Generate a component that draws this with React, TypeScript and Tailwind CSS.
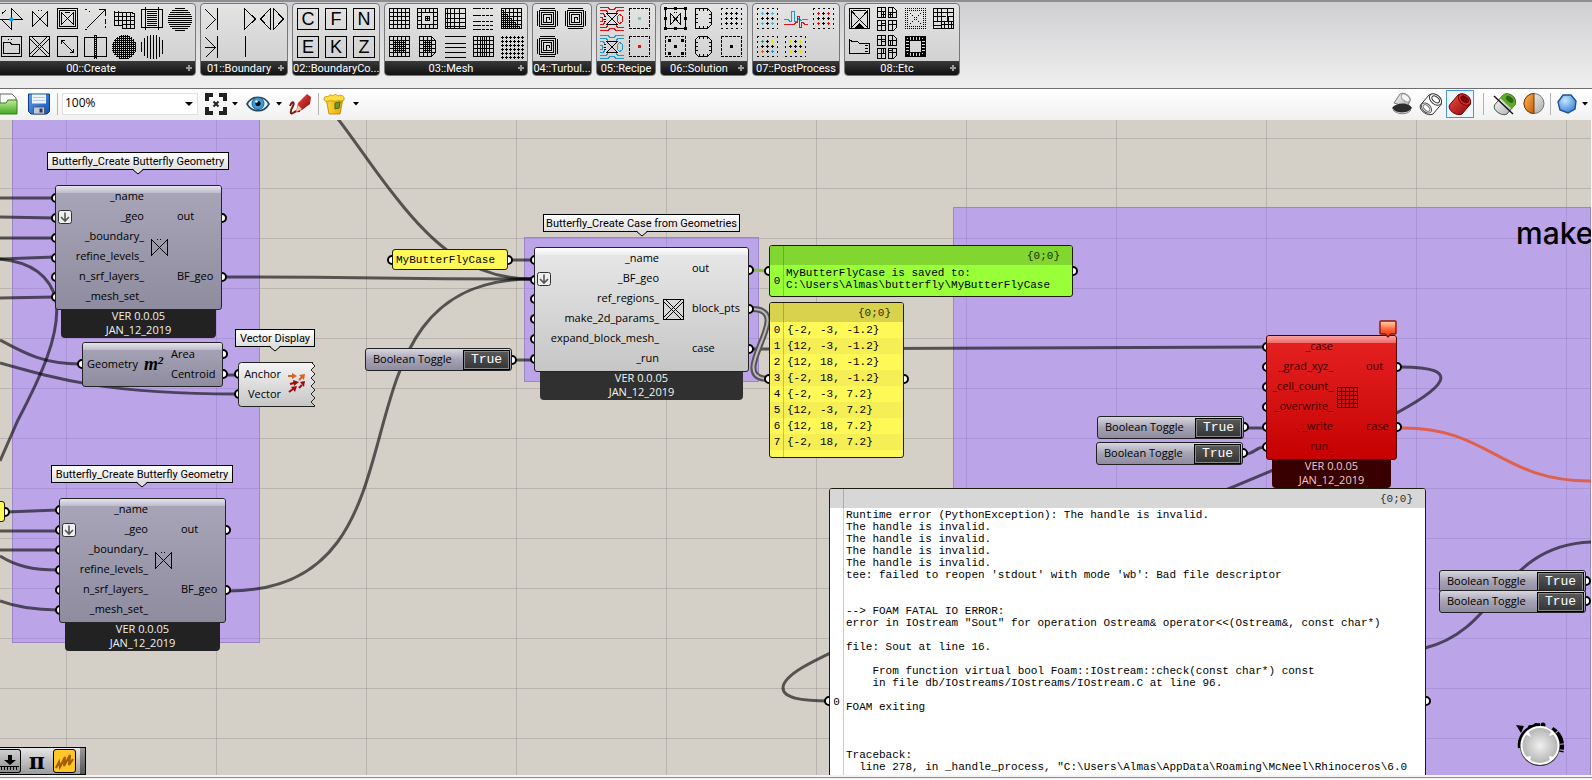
import React from "react";

/* ---------- path helpers for the component icons ---------- */

const range = (from: number, to: number, step: number) => {
  const out: number[] = [];
  for (let v = from; v <= to; v += step) out.push(v);
  return out;
};
const hLines = (ys: number[], x1 = 2, x2 = 22) => ys.map((y) => `M${x1} ${y}.5H${x2}`).join("");
const vLines = (xs: number[], y1 = 2, y2 = 22) => xs.map((x) => `M${x}.5 ${y1}V${y2}`).join("");
const chord = (v: number) => Math.round(Math.sqrt(Math.max(0, 150 - (v - 12) * (v - 12))));
const ballH = (step: number) => range(1, 23, step).map((y) => `M${Math.max(0, 12 - chord(y))} ${y}.5H${Math.min(24, 12 + chord(y))}`).join("");
const ballV = (step: number) => range(1, 23, step).map((x) => `M${x}.5 ${Math.max(0, 12 - chord(x))}V${Math.min(24, 12 + chord(x))}`).join("");
const BOX = "M1.5 1.5H21.5V21.5H1.5Z";
const GRID = hLines([1, 5, 9, 13, 17, 21], 1, 22) + vLines([1, 5, 9, 13, 17, 21], 1, 22);
const plus = (x: number, y: number) => `M${x - 1} ${y}.5H${x + 2}M${x}.5 ${y - 1}V${y + 2}`;

function Glyph({ children, d, className = "size-6" }: { children?: React.ReactNode; d?: string; className?: string }) {
  return (
    <svg viewBox="0 0 24 24" className={className} fill="none" stroke="#000" shapeRendering="crispEdges" aria-hidden="true">
      {d && <path d={d} />}
      {children}
    </svg>
  );
}

const Dashed = () => <path d="M1 1.5H22M1 21.5H22M1.5 1V22M21.5 1V22" strokeDasharray="3 1" />;

function Dot({ x = 10, y = 10, c = "#000", s = 3 }: { x?: number; y?: number; c?: string; s?: number }) {
  return <rect x={x} y={y} width={s} height={s} fill={c} stroke="none" />;
}

function PlusField({ marks = [] }: { marks?: string[] }) {
  const spots = [
    [6, 6],
    [16, 6],
    [6, 16],
    [16, 16],
  ];
  return (
    <Glyph>
      <path d="M1 1.5H22M1 21.5H22M1.5 1V22M21.5 1V22" strokeDasharray="2 3" />
      <path d={plus(11, 6) + plus(6, 11) + plus(11, 11) + plus(16, 11) + plus(11, 16)} />
      {spots.map(([x, y], i) => (
        <path key={i} d={plus(x, y)} stroke={marks[i] ?? "#000"} />
      ))}
    </Glyph>
  );
}

function Spiral() {
  return (
    <Glyph d="M4 1.5H19M1.5 4V19M21.5 4V19M4 21.5H19M3.5 3.5H19.5V19.5H3.5ZM5.5 5.5H17.5V17.5H5.5ZM7.5 7.5H15.5V15.5H7.5ZM10.5 15V10.5H13.5V13" />
  );
}

function Contour({ c }: { c: string }) {
  return (
    <Glyph>
      <path
        stroke={c}
        d="M0 .5H8L10 2.5H14L16 .5H24M0 3.5H6L8 5.5M24 3.5H18L16 5.5M0 6.5H3L5 8.5M0 23.5H8L10 21.5H14L16 23.5H24M0 20.5H6L8 18.5M24 20.5H18L16 18.5M0 17.5H3L5 15.5M0 10.5H2L3 12.5L2 14.5H0M17 9.5L20 7.5L22.5 9.5V14.5L20 16.5L17 14.5Z"
      />
      <path d="M6.5 6.5H17.5L6.5 17.5H17.5ZM4 9.5H6M4 12.5H6M4 14.5H6" />
    </Glyph>
  );
}

function Capsule({ left }: { left: boolean }) {
  return (
    <Glyph d={left ? "M3.5 4.5L6.5 1.5H15.5L19.5 5.5V17.5L15.5 21.5H6.5L3.5 18.5Z" : "M3.5 1.5H15.5L19.5 5.5V17.5L15.5 21.5H3.5Z"}>
      <path d="M7.5 2V4M11.5 2V4M15.5 2V4M7.5 19V21M11.5 19V21M15.5 19V21M4 7.5H6M4 11.5H6M4 15.5H6M17 7.5H19M17 11.5H19M17 15.5H19" />
    </Glyph>
  );
}

function Quads({ dense }: { dense: boolean }) {
  return (
    <Glyph>
      <path d="M1.5 .5H9.5V10.5H1.5ZM1.5 13.5H9.5V23.5H1.5ZM12.5 .5H17.5L20.5 3.5V10.5H12.5ZM12.5 13.5H20.5V20.5L17.5 23.5H12.5Z" />
      <path d="M1 4.5H9M5.5 1V10M1 18.5H9M5.5 14V23M12 5.5H20M16.5 1V10M12 17.5H20M16.5 14V23" />
      {dense ? <path d="M5 7.5H9M7.5 4V10M5 16.5H9M14.5 5V10M12 7.5H16" /> : <path d="M5 6.5H9M7.5 14V18M14.5 5V10M12 15.5H16" />}
    </Glyph>
  );
}

function Letter({ ch }: { ch: string }) {
  return (
    <span className="flex size-[22px] items-center justify-center border border-black font-['Liberation_Sans'] text-[18px] leading-none text-black">{ch}</span>
  );
}

const EMPTY = null;

const ribbon: { title: string; more: boolean; width: string; cols: string; rows: (React.ReactNode | null)[][] }[] = [
  {
    title: "00::Create",
    more: true,
    width: "w-[200px]",
    cols: "grid-cols-7",
    rows: [
      [
        <Glyph d="M0 12.5H22.5L11.5 1.5V22.5L1.5 12.5M2 6.5L6 3.5">
          <circle cx="11.5" cy="12.5" r="1.8" fill="#0aa0dc" stroke="#0aa0dc" shapeRendering="auto" />
        </Glyph>,
        <Glyph d="M4.5 4.5V19.5L19.5 4.5V19.5ZM10 3.5H11M13 3.5H14" />,
        <Glyph d={BOX + "M3.5 3.5H19.5V19.5H3.5ZM5.5 5.5V17.5L17.5 5.5V17.5ZM9 5.5H14"} />,
        <Glyph d="M2.5 21.5L21.5 2.5M15 2.5H21.5V9M1 2.5H3M5 4.5H6M1 22.5H3M21.5 12V17M21.5 19V21" />,
        <Glyph d="M2.5 3.5V18.5H10V21.5H22.5V6.5L18.5 5.5H2.5M2 9.5H22M2 13.5H22M10 17.5H22M6.5 4V18M10.5 5V21M14.5 6V21M18.5 6V21" />,
        <Glyph d={"M1.5 2.5H22.5V20.5H1.5ZM5.5 0V23M18.5 0V23" + hLines(range(4, 19, 2), 7, 17)} />,
        <Glyph d={ballH(2)} />,
      ],
      [
        <Glyph d={BOX + "M3.5 7.5V18.5H19.5V9.5H12L10 7.5ZM8 4.5H9M11 4.5H12"} />,
        <Glyph d={BOX + "M1 3L20 22M3 1L22 20M1 20L20 1M3 22L22 3"} />,
        <Glyph d={BOX + "M5.5 5.5L17.5 17.5M5 9V5.5H9M14 17.5H17.5V14"} />,
        <Glyph d="M.5 2.5H22.5V21.5H.5Z">
          <path d="M10.5 0V24M12.5 0V24" />
          <path d="M11.5 0V24" strokeDasharray="1 1" />
        </Glyph>,
        <Glyph d={ballH(2) + ballV(2)} />,
        <Glyph d={ballV(3)} />,
        EMPTY,
      ],
    ],
  },
  {
    title: "01::Boundary",
    more: true,
    width: "w-[88px]",
    cols: "grid-cols-3",
    rows: [
      [<Glyph d="M1.5 2.5L11.5 12.5L1.5 22.5M13.5 1V23" />, <Glyph d="M12.5 1.5V22.5L23.5 12Z" />, <Glyph d="M10.5 1.5V22.5L.5 12ZM13.5 1.5V22.5L23.5 12Z" />],
      [<Glyph d="M1.5 2.5L11.5 12.5L1.5 22.5M1 12.5H11M13.5 1V23" />, <Glyph d="M13.5 1V22" />, EMPTY],
    ],
  },
  {
    title: "02::BoundaryCo...",
    more: false,
    width: "w-[88px]",
    cols: "grid-cols-3",
    rows: [
      [<Letter ch="C" />, <Letter ch="F" />, <Letter ch="N" />],
      [<Letter ch="E" />, <Letter ch="K" />, <Letter ch="Z" />],
    ],
  },
  {
    title: "03::Mesh",
    more: true,
    width: "w-[144px]",
    cols: "grid-cols-5",
    rows: [
      [
        <Glyph d={GRID} />,
        <Glyph d={BOX + "M5.5 5.5H17.5V17.5H5.5ZM5.5 1V5M9.5 1V5M13.5 1V5M17.5 1V5M5.5 18V22M9.5 18V22M13.5 18V22M17.5 18V22M1 5.5H5M1 9.5H5M1 13.5H5M1 17.5H5M18 5.5H22M18 9.5H22M18 13.5H22M18 17.5H22M9.5 9.5H13.5V13.5H9.5ZM11.5 9V14M9 11.5H14"} />,
        <Glyph d={hLines([1, 6, 11, 15, 19, 21], 1, 22) + vLines([1, 3, 6, 10, 15, 21], 1, 22)} />,
        <Glyph>
          <path d="M1 1.5H9M1 8.5H9M1 14.5H9M1 18.5H9M1 22.5H9" />
          <path d="M10 1.5H22M10 8.5H22M10 14.5H22M10 18.5H22M10 22.5H22" strokeDasharray="3 1" />
        </Glyph>,
        <Glyph d={GRID + range(3, 19, 2).map((v) => `M1 ${v}.5H${v}M${22 - v}.5 ${22 - v}V22`).join("")} />,
      ],
      [
        <Glyph d={GRID + hLines(range(5, 17, 2), 6, 18) + vLines(range(5, 17, 2), 6, 18)} />,
        <Glyph d={"M3.5 1.5H15.5L19.5 5.5V17.5L15.5 21.5H3.5Z" + hLines([5, 9, 13, 17], 3, 19) + vLines([7, 11, 15], 2, 21) + hLines(range(7, 15, 2), 7, 16) + vLines(range(7, 15, 2), 6, 17)} />,
        <Glyph d={hLines([1, 8, 12, 17, 22], 1, 22)} />,
        <Glyph d={hLines([1, 5, 9, 13, 17, 21], 1, 22) + vLines([1, 5, 8, 10, 12, 14, 17, 21], 1, 22)} />,
        <Glyph>
          {range(2, 22, 4).map((y) => (
            <path key={y} d={range(2, 22, 4).map((x) => plus(x, y)).join("")} />
          ))}
        </Glyph>,
      ],
    ],
  },
  {
    title: "04::Turbul...",
    more: false,
    width: "w-[60px]",
    cols: "grid-cols-2",
    rows: [
      [<Spiral />, <Spiral />],
      [<Spiral />, EMPTY],
    ],
  },
  {
    title: "05::Recipe",
    more: false,
    width: "w-[60px]",
    cols: "grid-cols-2",
    rows: [
      [
        <Contour c="#e01010" />,
        <Glyph>
          <Dashed />
          <Dot c="#6cc8d0" />
        </Glyph>,
      ],
      [
        <Contour c="#1c9ad0" />,
        <Glyph>
          <Dashed />
          <Dot c="#e01010" />
        </Glyph>,
      ],
    ],
  },
  {
    title: "06::Solution",
    more: true,
    width: "w-[88px]",
    cols: "grid-cols-3",
    rows: [
      [
        <Glyph d={BOX + "M6.5 6.5V17.5L16.5 6.5V17.5ZM10 5.5H11M12 5.5H13"}>
          {[0, 10, 20].map((x) => [0, 10, 20].map((y) => (x === 10 && y === 10 ? null : <Dot key={`${x}-${y}`} x={x} y={y} />)))}
        </Glyph>,
        <Capsule left={false} />,
        <PlusField />,
      ],
      [
        <Glyph>
          <Dashed />
          <Dot />
          <Dot x={4} y={4} />
          <Dot x={17} y={4} />
          <Dot x={4} y={17} />
          <Dot x={17} y={17} />
        </Glyph>,
        <Capsule left />,
        <Glyph>
          <Dashed />
          <Dot />
        </Glyph>,
      ],
    ],
  },
  {
    title: "07::PostProcess",
    more: false,
    width: "w-[88px]",
    cols: "grid-cols-3",
    rows: [
      [
        <PlusField marks={["#48b8d0", "#48b8d0", "#48b8d0", "#48b8d0"]} />,
        <Glyph>
          <path d="M0 12.5H4L6 14.5H7V4.5H10V14.5H13L15 11.5L17 13.5L19 12.5H24" stroke="#1c9ad0" />
          <path d="M0 17.5H10L12 15.5H13V9.5H15V20.5H17V15.5H19L21 17.5H24" stroke="#d81818" />
        </Glyph>,
        <PlusField marks={["#e01010", "#e01010", "#e01010", "#e01010"]} />,
      ],
      [<PlusField marks={["#1a9a60", "#e8e010", "#e86020", "#1890e0"]} />, <PlusField marks={["#e0e010", "#e0e010", "#e0e010", "#e0e010"]} />, EMPTY],
    ],
  },
  {
    title: "08::Etc",
    more: true,
    width: "w-[116px]",
    cols: "grid-cols-4",
    rows: [
      [
        <Glyph d={BOX + "M3.5 3V20M19.5 3V20M3 3.5L11.5 12.5L20 3.5M3 21L11.5 12.5L20 21M5 3.5H18"}>
          <path d="M7 21L11.5 16.5L16 21Z" fill="#000" />
        </Glyph>,
        <Quads dense />,
        <Glyph>
          <path d="M1 1.5H22M1 3.5H22M1 19.5H22M1 21.5H22M1.5 1V22M3.5 1V22M19.5 1V22M21.5 1V22" strokeDasharray="1 1" />
          {range(6, 16, 2).map((v) => (
            <path key={v} d={`M${v} ${v}.5H${v + 1}M${22 - v} ${v}.5H${23 - v}`} />
          ))}
        </Glyph>,
        <Glyph d={BOX + "M5.5 1V14M9.5 1V22M1 9.5H14M1 5.5H22M1 14.5H22M15.5 1V14M15 9.5H22M10 17.5H22M12.5 15V22M16.5 9V22M19.5 14V22M1 18.5H9"} />,
      ],
      [
        <Glyph d="M1.5 4.5V18.5H21.5V8.5H12L9 6.5H4L1.5 4.5ZM17 10.5H20M17 13.5H20M17 16.5H20" />,
        <Quads dense={false} />,
        <Glyph d={BOX + "M5.5 5.5H17.5V17.5H5.5Z"}>
          <path d="M1 3.5H22M1 19.5H22M3.5 1V22M19.5 1V22" strokeWidth="3" strokeDasharray="2 1" />
        </Glyph>,
        EMPTY,
      ],
    ],
  },
];

function Ribbon() {
  return (
    <div className="flex h-[88px] shrink-0 items-start gap-1 overflow-hidden border-t-2 border-[#8e8e92] bg-linear-to-b from-[#cfcfd1] to-[#f0eff0] pt-px">
      {ribbon.map((tab, t) => (
        <section key={tab.title} className={`${tab.width} ${t === 0 ? "-ml-1" : ""} flex h-[73px] shrink-0 flex-col overflow-hidden rounded-[4px] border border-[#77777a] bg-linear-to-b from-[#e4e4e4] to-[#cdcdcd]`}>
          <div className={`grid ${tab.cols} flex-1 px-px pt-px`}>
            {tab.rows.flat().map((icon, i) =>
              icon ? (
                <button key={i} type="button" aria-label={`${tab.title} ${i + 1}`} className="flex size-7 items-center justify-center">
                  {icon}
                </button>
              ) : (
                <span key={i} />
              ),
            )}
          </div>
          <div className="flex h-[14px] items-center bg-linear-to-b from-[#3a3a3a] to-[#111] font-['Roboto'] text-[11px] leading-none text-white">
            <span className="flex-1 text-center whitespace-nowrap">{tab.title}</span>
            {tab.more && (
              <svg viewBox="0 0 8 8" className="mr-0.5 size-2" stroke="#9a9a9a" strokeWidth="2" aria-hidden="true">
                <path d="M4 1V7M1 4H7" />
              </svg>
            )}
          </div>
        </section>
      ))}
    </div>
  );
}

/* ---------- canvas toolbar ---------- */

function Caret() {
  return (
    <svg viewBox="0 0 6 4" className="h-1 w-1.5 shrink-0" aria-hidden="true">
      <path d="M0 0H6L3 3.5Z" />
    </svg>
  );
}

const Separator = () => <span className="h-[22px] w-px bg-[#b4b4b4]" />;

function Tool({ label, children, className = "w-6" }: { label: string; children: React.ReactNode; className?: string }) {
  return (
    <button type="button" aria-label={label} className={`flex h-7 shrink-0 items-center justify-center ${className}`}>
      {children}
    </button>
  );
}

function Cylinder({ body, top, hole, edge }: { body: string; top: string; hole: string; edge: string }) {
  return (
    <g stroke={edge} strokeLinejoin="round">
      <path d="M1.5 13L10 3C14 0 23 7 22.5 12L14 22C9 25 -1 18 1.5 13Z" fill={body} />
      <ellipse cx="16.5" cy="7.5" rx="7" ry="4.6" transform="rotate(40 16.5 7.5)" fill={top} />
      <ellipse cx="16.7" cy="7.3" rx="4.4" ry="2.6" transform="rotate(40 16.7 7.3)" fill={hole} />
    </g>
  );
}

function Toolbar() {
  return (
    <div className="flex h-8 shrink-0 items-center border-t border-[#6f6f72] bg-linear-to-b from-white to-[#f1f1f1] pr-1 pb-0.5">
      <svg width="0" height="0" className="absolute" aria-hidden="true">
        <defs>
          <linearGradient id="grn" x1="0" y1="0" x2="0" y2="1"><stop offset="0" stopColor="#c4ec9c" /><stop offset="1" stopColor="#3fa81f" /></linearGradient>
          <linearGradient id="blu" x1="0" y1="0" x2="1" y2="1"><stop offset="0" stopColor="#5aa2f0" /><stop offset="1" stopColor="#124fb4" /></linearGradient>
          <linearGradient id="red" x1="0" y1="0" x2="1" y2="1"><stop offset="0" stopColor="#f05048" /><stop offset="1" stopColor="#8c0404" /></linearGradient>
          <linearGradient id="gry" x1="0" y1="0" x2="1" y2="1"><stop offset="0" stopColor="#fff" /><stop offset="1" stopColor="#a8a8a8" /></linearGradient>
          <linearGradient id="org" x1="0" y1="0" x2="1" y2="1"><stop offset="0" stopColor="#ffb860" /><stop offset="1" stopColor="#c85c00" /></linearGradient>
          <linearGradient id="yel" x1="0" y1="0" x2="1" y2="0"><stop offset="0" stopColor="#ffd83c" /><stop offset="1" stopColor="#e8a400" /></linearGradient>
          <radialGradient id="sky" cx=".4" cy=".3" r=".7"><stop offset="0" stopColor="#c8e6ff" /><stop offset="1" stopColor="#3c84d8" /></radialGradient>
        </defs>
      </svg>
      <Tool label="Open" className="-ml-1 w-6">
        <svg viewBox="0 0 24 24" className="size-6" aria-hidden="true">
          <path d="M4 2H16L20 6V14H4Z" fill="#fafafa" stroke="#666" />
          <path d="M0 11H10L12 8H21V22H0Z" fill="url(#grn)" stroke="#3a7a1c" />
        </svg>
      </Tool>
      <Tool label="Save" className="ml-[7px] w-6">
        <svg viewBox="0 0 24 24" className="size-6" aria-hidden="true">
          <path d="M1.5 2H22.5V19.5L20 22H4L1.5 19.5Z" fill="url(#blu)" stroke="#0e3c8c" />
          <path d="M5 2.5H19V11.5H5Z" fill="#eef4fc" />
          <path d="M6 5.5H18M6 8.5H18" stroke="#b8c8dc" />
          <path d="M6.5 15H17.5V22H6.5Z" fill="#c4c8d0" stroke="#445" strokeWidth=".7" />
          <path d="M12.5 16.5H15.5V20.5H12.5Z" fill="#1c3a78" />
        </svg>
      </Tool>
      <span className="ml-1.5 flex items-center gap-1">
        <Separator />
        <span className="relative flex h-[22px] w-[136px] items-center border border-[#e0e0e0] bg-white">
          <select aria-label="Zoom" defaultValue="100%" className="h-full w-full appearance-none bg-transparent pb-0.5 pl-0.5 text-[12px] leading-none outline-none">
            <option>100%</option>
            <option>200%</option>
          </select>
          <svg viewBox="0 0 8 4" className="pointer-events-none absolute right-1 h-1 w-2" aria-hidden="true"><path d="M0 0H8L4 4Z" /></svg>
        </span>
      </span>
      <Tool label="Zoom extents" className="ml-1.5 w-6">
        <svg viewBox="0 0 24 24" className="size-6" fill="none" stroke="#222" strokeWidth="4" aria-hidden="true">
          <path d="M3 9V3H9M15 3H21V9M21 15V21H15M9 21H3V15" />
          <path d="M9.5 9.5L14.5 14.5M14.5 9.5L9.5 14.5" strokeWidth="2" />
        </svg>
      </Tool>
      <span className="mr-2 ml-1 flex"><Caret /></span>
      <Tool label="Named views">
        <svg viewBox="0 0 24 24" className="size-6" aria-hidden="true">
          <path d="M1 12C6 3 18 3 23 12C18 21 6 21 1 12Z" fill="#e4f2fa" stroke="#26485e" strokeWidth="1.6" />
          <circle cx="12" cy="11.5" r="6" fill="#3d9bd6" stroke="#1a5c8c" />
          <circle cx="12" cy="11.5" r="2.6" fill="#081018" />
          <circle cx="10.5" cy="9.5" r="1.3" fill="#fff" />
        </svg>
      </Tool>
      <span className="mr-1.5 ml-1.5 flex"><Caret /></span>
      <Tool label="Sketch">
        <svg viewBox="0 0 24 24" className="size-6" aria-hidden="true">
          <path d="M2 14C4 9 7 9 5 14C2 19 2 23 5 21C8 19 8 19 12 19" fill="none" stroke="#7c1c14" strokeWidth="2" />
          <path d="M8 20L10 11L19 2L23 5L22 12L14 18Z" fill="url(#red)" />
          <path d="M8 20L10 13L14 17Z" fill="#f0c8a0" />
        </svg>
      </Tool>
      <span className="mr-[3px] ml-1.5 flex"><Separator /></span>
      <Tool label="Preview settings">
        <svg viewBox="0 0 24 24" className="size-6" aria-hidden="true">
          <path d="M4 6H21L18 22H7Z" fill="url(#yel)" stroke="#b87c00" strokeWidth=".8" />
          <path d="M2 7C2 4 5 4 6 5C7 2 10 3 11 4C13 1 15 3 16 4C19 2 23 4 22 8C20 10 17 8 15 9C12 10 9 8 7 9C5 10 2 9 2 7Z" fill="#ffdc40" stroke="#c08800" strokeWidth=".8" />
          <path d="M13 11L18 10L17 16L13 17Z" fill="#6a9a28" stroke="#476a10" />
        </svg>
      </Tool>
      <span className="ml-[7px] flex"><Caret /></span>

      <div className="ml-auto flex items-center gap-[5px]">
        <Tool label="No preview">
          <svg viewBox="0 0 24 24" className="size-6" aria-hidden="true">
            <path d="M4 11L10 2C14 -1 22 5 20 9L17 15Z" fill="url(#gry)" stroke="#777" />
            <ellipse cx="15.5" cy="6" rx="5" ry="3" transform="rotate(40 15.5 6)" fill="#f4f4f4" stroke="#999" />
            <path d="M2 16C6 10 19 10 22 16C18 22 6 22 2 16Z" fill="#2c2c2c" />
            <path d="M3 18C8 23 17 23 21 18" fill="none" stroke="#777" />
          </svg>
        </Tool>
        <Tool label="Wireframe preview">
          <svg viewBox="0 0 24 24" className="size-6" aria-hidden="true">
            <Cylinder body="#fff" top="#fff" hole="#fff" edge="#333" />
            <ellipse cx="7.5" cy="16" rx="6" ry="4" transform="rotate(45 7.5 16)" fill="none" stroke="#555" />
            <ellipse cx="7.5" cy="16" rx="4" ry="2.3" transform="rotate(45 7.5 16)" fill="none" stroke="#777" />
          </svg>
        </Tool>
        <Tool label="Shaded preview" className="-ml-0.5 w-7 border border-[#4a94d8] bg-[#eef6fd]">
          <svg viewBox="0 0 24 24" className="size-6" aria-hidden="true">
            <Cylinder body="url(#red)" top="#d83830" hole="#7c0808" edge="#700" />
          </svg>
        </Tool>
        <span className="mx-1 flex"><Separator /></span>
        <Tool label="Preview selected only">
          <svg viewBox="0 0 24 24" className="size-6" aria-hidden="true">
            <Cylinder body="url(#gry)" top="#8ed050" hole="#3c7c10" edge="#4a5a40" />
            <path d="M7 6L11 2C15 0 23 7 22.5 12L19 17Z" fill="#5aac20" />
            <ellipse cx="16.7" cy="7.3" rx="4.4" ry="2.6" transform="rotate(40 16.7 7.3)" fill="#2e6a0c" />
            <path d="M1 4L20 22" stroke="#111" strokeWidth="1.4" />
          </svg>
        </Tool>
        <Tool label="Material settings">
          <svg viewBox="0 0 24 24" className="size-6" aria-hidden="true">
            <circle cx="12" cy="11.5" r="10" fill="url(#gry)" stroke="#777" />
            <path d="M12 1.5A10 10 0 0 0 12 21.5Z" fill="url(#org)" stroke="#7c3800" />
          </svg>
        </Tool>
        <span className="-mx-px flex"><Separator /></span>
        <Tool label="Mesh quality">
          <svg viewBox="0 0 24 24" className="size-6" aria-hidden="true">
            <path d="M8 3L16 3L21 9L20 17L13 21L5 18L3 10Z" fill="url(#sky)" stroke="#244f94" strokeWidth="1.4" />
          </svg>
        </Tool>
        <span className="-ml-0.5 flex"><Caret /></span>
      </div>
    </div>
  );
}

/* ---------- canvas objects ---------- */

const cubic = (x1: number, y1: number, x2: number, y2: number, d: number) => `M${x1} ${y1}C${x1 + d} ${y1} ${x2 - d} ${y2} ${x2} ${y2}`;

const wires = [
  "M0 198H55",
  "M0 217L55 218",
  "M0 238H55",
  "M0 259L55 257",
  "M0 298L55 297",
  "M0 259C30 262 50 275 56 300C61 334 40 378 18 420L0 461",
  "M0 340C26 354 44 364 80 364",
  "M0 363C60 380 110 394 236 394",
  "M226 375H237",
  cubic(224, 277, 532, 279, 150),
  cubic(228, 591, 532, 279, 220),
  "M338 119C356 142 375 172 398 200C432 243 470 279 532 279",
  "M510 260H533",
  "M516 360H533",
  cubic(753, 349, 1265, 347, 250),
  "M1401 367C1530 367 1322 451 1118 534",
  "M900 620C840 650 783 670 783 688C783 699 806 701 829 701",
  "M1245 428H1265",
  cubic(1245, 454, 1265, 447, 10),
  "M1425 648C1500 630 1500 545 1592 542",
  "M6 512L58 510",
  "M0 531H58",
  "M0 550H58",
  "M0 556C16 566 32 570 58 570",
  "M0 601C16 607 32 610 58 610",
];

const grips: [number, number][] = [
  ...[198, 218, 238, 258, 277, 297].map((y) => [56, y] as [number, number]),
  [222, 218],
  [222, 277],
  [82, 364],
  [223, 354],
  [223, 374],
  [239, 374],
  [239, 394],
  ...[510, 530, 550, 570, 590, 610].map((y) => [60, y] as [number, number]),
  [226, 530],
  [226, 590],
  [5, 512],
  [392, 260],
  [508, 260],
  [512, 360],
  ...[260, 280, 299, 319, 339, 359].map((y) => [535, y] as [number, number]),
  [749, 270],
  [749, 309],
  [749, 349],
  [769, 271],
  [1073, 271],
  [769, 379],
  [904, 379],
  [829, 701],
  [1426, 701],
  ...[347, 367, 387, 407, 427, 447].map((y) => [1267, y] as [number, number]),
  [1397, 367],
  [1397, 427],
  [1244, 427],
  [1243, 453],
  [1586, 581],
  [1586, 601],
];

function Wires() {
  return (
    <svg className="absolute inset-0 size-full" fill="none" aria-hidden="true">
      <g transform="translate(0 -120)">
        <g stroke="#000" strokeOpacity=".6" strokeWidth="3">
          {wires.map((d) => (
            <path key={d} d={d} />
          ))}
        </g>
        <path d={cubic(753, 270, 769, 271, 6)} stroke="#86b84a" strokeWidth="3" />
        <path d={cubic(752, 309, 769, 379, 46)} stroke="#57545a" strokeWidth="6" />
        <path d={cubic(752, 309, 769, 379, 46)} stroke="#bcb8b8" strokeWidth="2" />
        <path d="M1401 428C1490 427 1500 482 1592 481" stroke="#e0604e" strokeWidth="3" />
        {grips.map(([x, y]) => (
          <circle key={`${x}-${y}`} cx={x} cy={y} r="4" fill="#fff" stroke="#000" strokeWidth="2" />
        ))}
      </g>
    </svg>
  );
}

function Caption({ place, text }: { place: string; text: string }) {
  return (
    <div className={`absolute ${place} flex h-[18px] items-center justify-center border border-black bg-linear-to-b from-white to-[#dedede] font-['Roboto'] text-[11px] leading-none whitespace-nowrap text-black`}>
      {text}
      <svg viewBox="0 0 12 7" className="absolute top-[15px] h-[7px] w-3" aria-hidden="true">
        <path d="M0 0H12L6 6Z" fill="#dedede" />
        <path d="M0 1L6 6L12 1" fill="none" stroke="#000" />
      </svg>
    </div>
  );
}

function Flatten() {
  return (
    <svg viewBox="0 0 14 14" className="absolute top-6 left-0.5 size-3.5" aria-hidden="true">
      <rect x=".5" y=".5" width="13" height="13" rx="2" fill="#eee" stroke="#333" />
      <path d="M7 2.5V11M3 7L7 11L11 7" fill="none" stroke="#555" strokeWidth="1.6" />
    </svg>
  );
}

const skins = {
  hidden: {
    body: "border-[#232326] bg-linear-to-b from-[#a8a6b8] to-[#8e8c9e] text-black",
    shine: "from-[#e6e5ec] to-[#bdbbca]",
    foot: "bg-[#222] text-[#f0f0f0]",
  },
  normal: {
    body: "border-[#232323] bg-linear-to-b from-[#e8e8e8] to-[#c6c6c6] text-black",
    shine: "from-white to-[#ececec]",
    foot: "bg-[#303030] text-[#f4f4f4]",
  },
  error: {
    body: "border-[#4a0000] bg-linear-to-b from-[#e62020] to-[#c60000] text-[#3c0000]",
    shine: "from-[#f8a4a4] to-[#ee6a6a]",
    foot: "bg-[#380000] text-[#f4c8c8]",
  },
};

function Component(props: { place: string; skin: keyof typeof skins; inputs: string[]; outputs: string[]; inWidth: string; outWidth: string; icon: React.ReactNode; flatten?: boolean }) {
  const skin = skins[props.skin];
  return (
    <article className={`absolute ${props.place} text-[11px] leading-none`}>
      <div className={`relative flex h-[125px] overflow-hidden rounded-[3px] border ${skin.body}`}>
        <span className={`absolute inset-x-0 top-0 h-[7px] bg-linear-to-b ${skin.shine}`} />
        {props.flatten && <Flatten />}
        <ul className={`relative flex flex-col text-right ${props.inWidth}`}>
          {props.inputs.map((name) => (
            <li key={name} className="h-5 pt-1 whitespace-nowrap">{name}</li>
          ))}
        </ul>
        <div className="flex w-[30px] items-center justify-center">{props.icon}</div>
        <ul className={`relative flex flex-col pb-1 pl-[3px] ${props.outWidth}`}>
          {props.outputs.map((name) => (
            <li key={name} className="flex flex-1 items-center whitespace-nowrap">{name}</li>
          ))}
        </ul>
      </div>
      <div className={`mx-1.5 -mt-px h-[29px] rounded-b-[4px] text-center leading-[14px] ${skin.foot}`}>
        VER 0.0.05
        <br />
        JAN_12_2019
      </div>
    </article>
  );
}

function Toggle({ place }: { place: string }) {
  return (
    <div className={`absolute ${place} flex h-[23px] w-[147px] items-center justify-between rounded-[3px] border border-[#222226] bg-linear-to-b from-[#d8d7de] via-[#a5a3b3] to-[#8e8c9e] pr-px pl-[7px]`}>
      <span className="pb-0.5 text-[11px] leading-none whitespace-nowrap">Boolean Toggle</span>
      <button type="button" aria-label="Boolean Toggle" className="flex h-5 w-[47px] items-center justify-center border border-black bg-linear-to-b from-[#5a5a5a] to-[#343434] font-['Liberation_Mono'] text-[13px] leading-none text-white outline-1 -outline-offset-2 outline-[#888]">
        True
      </button>
    </div>
  );
}

const panelBase = "absolute overflow-hidden rounded-[3px] border border-[#1c1c10] font-['Liberation_Mono'] text-[11px] leading-3 text-black";

function PanelHead({ tone }: { tone: string }) {
  return (
    <thead>
      <tr className={`h-[19px] ${tone}`}>
        <td className="w-[14px] border-r border-black/20" />
        <th scope="col" className="pr-3 text-right font-normal opacity-80">{"{0;0}"}</th>
      </tr>
    </thead>
  );
}

const points = ["{-2, -3, -1.2}", "{12, -3, -1.2}", "{12, 18, -1.2}", "{-2, 18, -1.2}", "{-2, -3, 7.2}", "{12, -3, 7.2}", "{12, 18, 7.2}", "{-2, 18, 7.2}"];

const log = `Runtime error (PythonException): The handle is invalid.
The handle is invalid.
The handle is invalid.
The handle is invalid.
The handle is invalid.
tee: failed to reopen 'stdout' with mode 'wb': Bad file descriptor


--> FOAM FATAL IO ERROR:
error in IOstream "Sout" for operation Ostream& operator<<(Ostream&, const char*)

file: Sout at line 16.

    From function virtual bool Foam::IOstream::check(const char*) const
    in file db/IOstreams/IOstreams/IOstream.C at line 96.

FOAM exiting



Traceback:
  line 278, in _handle_process, "C:\\Users\\Almas\\AppData\\Roaming\\McNeel\\Rhinoceros\\6.0`;

function Panels() {
  return (
    <>
      <div className={`${panelBase} top-[129px] left-[392px] flex h-[21px] w-[116px] items-center bg-[#fff958] pl-[3px]`}>MyButterFlyCase</div>
      <div className={`${panelBase} top-[381px] -left-5 h-[21px] w-[25px] bg-[#fff958]`} />

      <table className={`${panelBase} top-[125px] left-[769px] h-[52px] w-[304px] border-separate border-spacing-0 bg-[#98ff38]`}>
        <PanelHead tone="bg-[#82d630]" />
        <tbody>
          <tr>
            <td className="w-[14px] border-r border-black/20 pl-px text-center">0</td>
            <td className="pb-1 pl-[2px] whitespace-pre">{"MyButterFlyCase is saved to:\nC:\\Users\\Almas\\butterfly\\MyButterFlyCase"}</td>
          </tr>
        </tbody>
      </table>

      <table className={`${panelBase} top-[182px] left-[769px] h-[156px] w-[135px] border-separate border-spacing-0 bg-[#fff958]`}>
        <PanelHead tone="bg-[#d8d24c]" />
        <tbody>
          {points.map((p, i) => (
            <tr key={i} className={`h-4 ${i % 2 ? "bg-[#f5ee54]" : ""}`}>
              <td className="w-[14px] border-r border-black/20 pl-px text-center">{i}</td>
              <td className="pl-[3px] whitespace-pre">{p}</td>
            </tr>
          ))}
          <tr>
            <td className="border-r border-black/20" />
            <td />
          </tr>
        </tbody>
      </table>

      <table className={`${panelBase} top-[368px] left-[829px] h-[408px] w-[597px] border-separate border-spacing-0 bg-white`}>
        <PanelHead tone="bg-[#d7d7d7]" />
        <tbody>
          <tr>
            <td className="w-[14px] border-r border-black/20 text-center">0</td>
            <td className="pt-px pl-[2px] align-top whitespace-pre">{log}</td>
          </tr>
        </tbody>
      </table>
    </>
  );
}

const bowtieIcon = <Glyph d="M4.5 3.5V19.5L20.5 3.5V19.5ZM10 3.5H11M13 3.5H14" />;

function AreaNode() {
  return (
    <div className="absolute top-[222px] left-[82px] flex h-[45px] w-[141px] items-center overflow-hidden rounded-[3px] border border-[#232326] bg-linear-to-b from-[#a8a6b8] to-[#8e8c9e] pb-0.5 pl-1 text-[11px] leading-none">
      <span className="absolute inset-x-0 top-0 h-[7px] bg-linear-to-b from-[#e6e5ec] to-[#bdbbca]" />
      <span className="w-[57px]">Geometry</span>
      <span className="w-[27px] font-['Liberation_Serif'] text-[18px] font-bold italic">
        m<sup className="text-[11px]">2</sup>
      </span>
      <ul className="relative">
        <li className="flex h-5 items-center">Area</li>
        <li className="flex h-5 items-center">Centroid</li>
      </ul>
    </div>
  );
}

function VectorNode() {
  return (
    <div className="absolute top-[242px] left-[238px] flex h-[45px] w-[78px] items-center pb-[3px] pl-[5px] text-[11px] leading-none">
      <svg viewBox="0 0 78 45" className="absolute inset-0 size-full" aria-hidden="true">
        <defs>
          <linearGradient id="vec" x1="0" y1="0" x2="0" y2="1"><stop offset="0" stopColor="#f4f4f4" /><stop offset="1" stopColor="#c6c6c6" /></linearGradient>
        </defs>
        <path d="M77 .5H3.5Q.5 .5 .5 3.5V41.5Q.5 44.5 3.5 44.5H77L73 40L77 36L73 32L77 28L73 24L77 20L73 16L77 12L73 8L77 4L74 .5" fill="url(#vec)" />
        <path d="M75 .5H3.5Q.5 .5 .5 3.5V41.5Q.5 44.5 3.5 44.5H77" fill="none" stroke="#222" />
        <path d="M77 44L73 40L77 36L73 32L77 28L73 24L77 20L73 16L77 12L73 8L77 4L74 1" fill="none" stroke="#222" />
      </svg>
      <ul className="relative w-[38px]">
        <li className="flex h-5 items-center justify-end">Anchor</li>
        <li className="flex h-5 items-center justify-end">Vector</li>
      </ul>
      <svg viewBox="0 0 20 22" className="relative ml-1.5 h-[22px] w-5" aria-hidden="true">
        <g stroke="#e0601c" fill="#e0601c" strokeWidth="2">
          <path d="M1 4H5M12 8L15 5" />
          <path d="M5 1L10 4L5 7ZM12 3L18 2L17 8Z" stroke="none" />
        </g>
        <g stroke="#a00c0c" fill="#a00c0c" strokeWidth="2">
          <path d="M3 12L7 11M12 16L15 13M2 20L6 17" />
          <path d="M6 8L12 10L7 14ZM13 10L18 9L17 15ZM4 15L10 14L8 20Z" stroke="none" />
        </g>
      </svg>
    </div>
  );
}

function MarkovDial() {
  return (
    <svg viewBox="0 0 60 48" className="absolute top-[600px] left-[1510px] h-12 w-[60px]" aria-hidden="true">
      <defs>
        <radialGradient id="dial"><stop offset="0" stopColor="#f0f0f0" /><stop offset="1" stopColor="#b2b2b2" /></radialGradient>
      </defs>
      <path d="M10 28C8 16 18 6 30 5" fill="none" stroke="#000" strokeWidth="4" />
      <path d="M42 9C50 14 53 22 51 32" fill="none" stroke="#000" strokeWidth="5" strokeDasharray="5 1 12 1" />
      <path d="M6 5L14 6L11 13Z" fill="#000" />
      <circle cx="26" cy="5.500" r="2.500" />
      <circle cx="33" cy="5" r="2.500" />
      <circle cx="20" cy="7" r="2" />
      <circle cx="30" cy="26" r="20" fill="#333" />
      <circle cx="30" cy="25.500" r="18.500" fill="url(#dial)" stroke="#fff" strokeWidth="2" />
      <path d="M15 14L21 17L18 10ZM45 14L39 16L42 10ZM15 37L21 36L20 42ZM45 37L39 36L40 42Z" fill="#fff" />
    </svg>
  );
}

function CanvasTray() {
  return (
    <div className="absolute bottom-0 left-0 flex h-7 w-[86px] items-center gap-1 border border-l-0 border-black bg-linear-to-b from-[#e6e6e6] to-[#9c9c9c]">
      <button type="button" aria-label="Import" className="flex h-6 w-[21px] items-center justify-center rounded-r-[3px] border border-l-0 border-black bg-linear-to-b from-[#cfcfcf] to-[#909090]">
        <svg viewBox="0 0 20 20" className="size-5" aria-hidden="true">
          <path d="M8 4H12V9H16L10 14L4 9H8Z" />
          <path d="M0 15.5H19M1.5 16V19M4.5 16V19M7.5 16V19M10.5 16V19M13.5 16V19M16.5 16V19" stroke="#000" />
        </svg>
      </button>
      <button type="button" aria-label="Pi" className="flex size-6 items-center justify-center font-['DejaVu_Serif'] text-[22px] leading-none font-bold">
        π
      </button>
      <button type="button" aria-label="Scribble" className="flex size-6 items-center justify-center rounded-[3px] border border-black bg-[#ffc628]">
        <svg viewBox="0 0 20 20" className="size-5" fill="none" stroke="#a85c00" strokeWidth="2.200" aria-hidden="true">
          <path d="M2 17L5 11L6 16L11 6L10 15L16 4L15 14L19 8" />
        </svg>
      </button>
      <span className="ml-auto h-full w-[5px] bg-linear-to-b from-[#999] to-[#555]" />
    </div>
  );
}

const group = "absolute border border-[#9c86c4] bg-[#bba5e8]";
const gridFill =
  "bg-[linear-gradient(to_right,rgba(0,0,0,0.13)_1px,transparent_1px),linear-gradient(to_bottom,rgba(0,0,0,0.13)_1px,transparent_1px)] bg-[size:150px_50px] bg-[position:66px_18px]";
const gridSoft =
  "bg-[linear-gradient(to_right,rgba(60,30,110,0.13)_1px,transparent_1px),linear-gradient(to_bottom,rgba(60,30,110,0.13)_1px,transparent_1px)] bg-[size:150px_50px]";

function Canvas() {
  return (
    <main className={`relative mr-px flex-1 overflow-hidden bg-[#d4d0c8] ${gridFill}`}>
      <div className={`${group} ${gridSoft} -top-px left-3 h-[524px] w-[248px] bg-[position:53px_18px]`} />
      <div className={`${group} ${gridSoft} top-[117px] left-[524px] h-[145px] w-[235px] bg-[position:141px_0px]`} />
      <div className={`${group} ${gridSoft} top-[87px] right-0 -bottom-px left-[953px] bg-[position:12px_30px]`} />
      <h2 className="absolute top-[95px] left-[1516px] font-['Inter'] text-[30px] leading-9 font-medium whitespace-nowrap text-black">make</h2>
      <Wires />

      <Caption place="left-[47px] top-[32px] w-[182px]" text="Butterfly_Create Butterfly Geometry" />
      <Component place="left-[55px] top-[65px] w-[167px]" skin="hidden" flatten inWidth="w-[88px]" outWidth="w-[44px]" icon={bowtieIcon} inputs={["_name", "_geo", "_boundary_", "refine_levels_", "n_srf_layers_", "_mesh_set_"]} outputs={["out", "BF_geo"]} />
      <AreaNode />
      <Caption place="left-[235px] top-[209px] w-[80px]" text="Vector Display" />
      <VectorNode />

      <Caption place="left-[51px] top-[345px] w-[182px]" text="Butterfly_Create Butterfly Geometry" />
      <Component place="left-[59px] top-[378px] w-[167px]" skin="hidden" flatten inWidth="w-[88px]" outWidth="w-[44px]" icon={bowtieIcon} inputs={["_name", "_geo", "_boundary_", "refine_levels_", "n_srf_layers_", "_mesh_set_"]} outputs={["out", "BF_geo"]} />

      <Caption place="left-[543px] top-[94px] w-[197px]" text="Butterfly_Create Case from Geometries" />
      <Component
        place="left-[534px] top-[127px] w-[215px]"
        skin="normal"
        flatten
        inWidth="w-[124px]"
        outWidth="w-[54px]"
        icon={<Glyph d={BOX + "M1 3L20 22M3 1L22 20M1 20L20 1M3 22L22 3"} />}
        inputs={["_name", "_BF_geo", "ref_regions_", "make_2d_params_", "expand_block_mesh_", "_run"]}
        outputs={["out", "block_pts", "case"]}
      />
      <Toggle place="left-[365px] top-[228px]" />
      <Panels />

      <Component place="left-[1266px] top-[215px] w-[131px]" skin="error" inWidth="w-[66px]" outWidth="w-[28px]" icon={<Glyph d={GRID} />} inputs={["_case", "_grad_xyz_", "_cell_count_", "_overwrite_", "_write", "run_"]} outputs={["out", "case"]} />
      <svg viewBox="0 0 18 18" className="absolute top-[200px] left-[1379px] size-[18px]" aria-hidden="true">
        <defs>
          <linearGradient id="err" x1="0" y1="0" x2="0" y2="1"><stop offset="0" stopColor="#ffd8b8" /><stop offset=".5" stopColor="#ff6a3c" /><stop offset="1" stopColor="#f02800" /></linearGradient>
        </defs>
        <path d="M2 1H16Q17 1 17 2V13Q17 14 16 14H12L9 17L6 14H2Q1 14 1 13V2Q1 1 2 1Z" fill="url(#err)" stroke="#8c1400" strokeWidth="1.400" />
      </svg>
      <Toggle place="left-[1097px] top-[296px]" />
      <Toggle place="left-[1096px] top-[322px]" />
      <Toggle place="left-[1439px] top-[450px]" />
      <Toggle place="left-[1439px] top-[470px]" />

      <MarkovDial />
      <CanvasTray />
    </main>
  );
}

export default function App() {
  return (
    <div className="flex h-screen min-h-0 flex-col overflow-hidden bg-[#f6f6f6] font-['Open_Sans',sans-serif] text-black">
      <Ribbon />
      <Toolbar />
      <Canvas />
      <footer className="h-[5px] shrink-0 border-t border-b border-t-[#f4f4f4] border-b-white bg-[#f4f4f4]">
        <div className="mt-px h-px bg-[#8c8c8c]" />
      </footer>
    </div>
  );
}
